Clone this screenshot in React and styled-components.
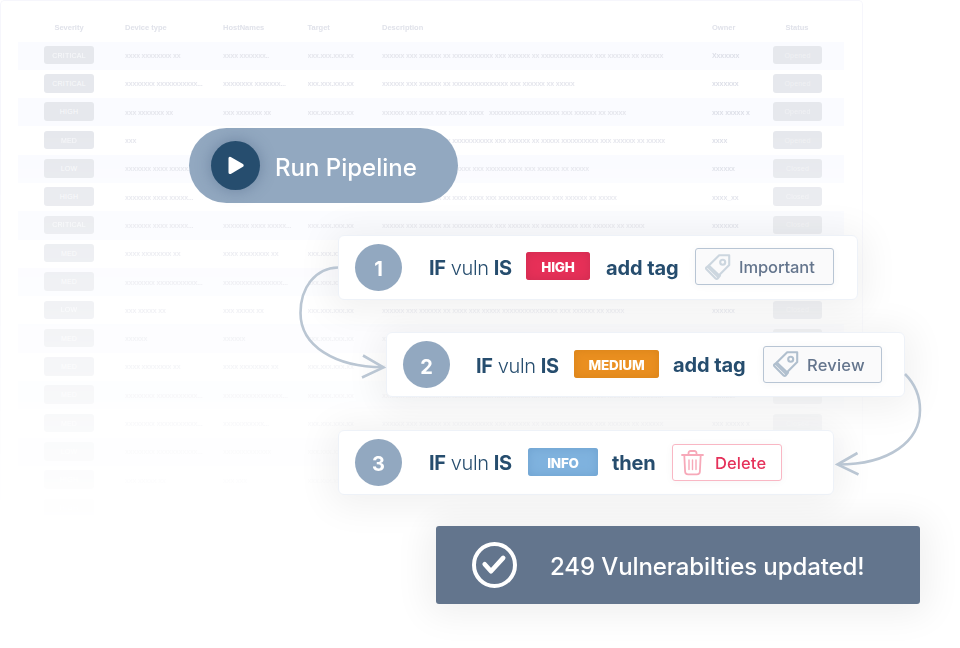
import React from 'react';
import styled, { createGlobalStyle } from 'styled-components';

const GlobalStyle = createGlobalStyle`
  * { box-sizing: border-box; }
  body {
    margin: 0;
    background: #fff;
    overflow: hidden;
    font-family: Inter, "Liberation Sans", sans-serif;
  }
`;

const Stage = styled.main`
  position: relative;
  width: 960px;
  height: 648px;
  overflow: hidden;
  background: #fff;
`;

/* ---------- vulnerability table ---------- */

const TablePanel = styled.section`
  width: 863px;
  height: 526px;
  padding: 12px 18px 0 17px;
  border: 1px solid #f6f6fc;
  border-radius: 4px;
  font-family: "Liberation Sans", sans-serif;
  mask-image: linear-gradient(to bottom, #000 130px, rgba(0, 0, 0, 0.54) 310px, rgba(0, 0, 0, 0.2) 440px, transparent 524px);
`;

const TableGrid = styled.div`
  display: grid;
  grid-template-columns: 100px 98px 84.5px 74.5px 330px 54px 1fr;
  align-items: center;
  padding-left: 7px;
  white-space: nowrap;
`;

const HeaderRow = styled(TableGrid)`
  height: 28.5px;
  color: #e0e2ea;
  font-size: 7.5px;
  font-weight: 700;
`;

const Row = styled(TableGrid)`
  height: 28.3px;
  background: ${(p) => (p.$band ? '#fafbff' : 'transparent')};
`;

const Cell = styled.span`
  color: ${(p) => (p.$strong ? '#dddfe8' : '#e5e6ed')};
  font-size: 7px;
  font-weight: 700;
  letter-spacing: ${(p) => (p.$strong ? -0.1 : -0.18)}px;
  overflow: hidden;
`;

const CenterHead = styled.span`
  width: 50px;
  margin-left: ${(p) => p.$left}px;
  text-align: center;
`;

const Pill = styled.span`
  display: flex;
  align-items: center;
  justify-content: center;
  width: ${(p) => (p.$faint ? 49 : 50)}px;
  height: 18.5px;
  margin: -1px 0 0 ${(p) => p.$left}px;
  border-radius: 3px;
  background: #e6e8ed;
  color: ${(p) => (p.$faint ? '#f0f1f4' : '#f8f9fb')};
  font-size: 7px;
  letter-spacing: 0.2px;
`;

const D1 = 'xxxxxx xxx xxxxxx xx xxxxxxxxxxx xxx xxxxxx xx xxxxxxxxxxxxxx xxx xxxxxx xx xxxxxx';
const ROWS = [
  ['CRITICAL', 'xxxx xxxxxxxx xx', 'xxxx xxxxxxx..', D1, 'Xxxxxxx', 'Opened'],
  ['CRITICAL', 'xxxxxxxx xxxxxxxxxxx...', 'xxxxxxxx xxxxxxx...', 'xxxxxx xxx xxxxxx xx xxxxxxxxxxxxxxx xxx xxxxxx xx xxxxx', 'xxxxxxx', 'Opened'],
  ['HIGH', 'xxx xxxxxxx xx', 'xxx xxxxxxx xx', 'xxxxxx xxx xxxx xxx xxxxx xxxx \u00a0 xxxxxxxxxxxxxxxxxxx xxx xxxxxx xx xxxxx', 'xxx xxxxx x', 'Opened'],
  ['MED', 'xxx', 'xxx', 'xxxxxx xxx xxxxxx xx xxxxxxxxxxx xxx xxxxxx xx xxxxx xxxxxxxxxx xxx xxxxxx xx xxxxx', 'xxxx', 'Opened'],
  ['LOW', 'xxxxxxx xxxx xxxxx...', 'xxxxxxx xxxx xxxxx...', 'xxxxxx xxx xxxxxx xx xxxxx xxx xxxxxxxxxx xxx xxxxxx xx xxxxx', 'xxxxxx', 'Closed'],
  ['HIGH', 'xxxxxxx xxxx xxxxx...', 'xxxxxxx xxxx xxxxx...', 'xxxxxx xxx xxxxxx xx xxxx xxxx xxx xxxxxxxxxxxxxx xxx xxxxxx xx xxxxx', 'xxxx_xx', 'Closed'],
  ['CRITICAL', 'xxxxxxx xxxx xxxxx...', 'xxxxxxx xxxx xxxxx...', 'xxxxxx xxx xxxxxx xx xxxxxxxxxxx xxx xxxxxx xx xxxxxxxxxx xxx xxxxxx xx xxxxx', 'xxxxxxx', 'Closed'],
  ['MED', 'xxxx xxxxxxxx xx', 'xxxx xxxxxxxx xx', D1, 'xxxxxxx', 'Closed'],
  ['MED', 'xxxxxxxx xxxxxxxxxxx...', 'xxxxxxxxxxxxxxxx...', D1, 'xxxxxxx', 'Closed'],
  ['LOW', 'xxx xxxxx xx', 'xxx xxxxx xx', 'xxxxxx xxx xxxxxx xx xxxx xxx xxxxx xxxxxxxxxxxxxxx xxx xxxxxx xx xxxxx', 'xxxxxx', 'Closed'],
  ['MED', 'xxxxxx', 'xxxxxx', D1, 'xxxxxx', 'Closed'],
  ['MED', 'xxxx xxxxxxxx xx', 'xxxx xxxxxxxx xx', D1, 'xxxxxx', 'Closed'],
  ['MED', 'xxxxxxxx xxxxxxxxxxx...', 'xxxxxxxxxxxxxxxx...', D1, 'xxxxxx', 'Closed'],
  ['MED', 'xxxxxxxx xxxxxxxxxxx...', 'xxxxxxxxxxx...', D1, 'xxx xxxxx x', 'Closed'],
  ['LOW', 'xxxxxxxx xxxxxxxxxxx...', 'xxxxxxxxxxxxx', D1, 'xxxxxx', 'Closed'],
  ['HIGH', 'xxx xxxxx xx', 'xxx xxx', D1, 'xxxxxx', 'Closed'],
  ['HIGH', '', '', '', '', ''],
];

function VulnTable() {
  return (
    <TablePanel>
      <HeaderRow>
        <CenterHead $left={19}>Severity</CenterHead>
        <span>Device type</span>
        <span>HostNames</span>
        <span>Target</span>
        <span>Description</span>
        <span>Owner</span>
        <CenterHead $left={6}>Status</CenterHead>
      </HeaderRow>
      {ROWS.map(([severity, device, host, description, owner, status], i) => (
        <Row key={i} $band={i % 2 === 0}>
          <Pill $left={19}>{severity}</Pill>
          <Cell>{device}</Cell>
          <Cell>{host}</Cell>
          <Cell>{device && 'xxx.xxx.xxx.xx'}</Cell>
          <Cell>{description}</Cell>
          <Cell $strong>{owner}</Cell>
          {status && <Pill $left={7} $faint>{status}</Pill>}
        </Row>
      ))}
    </TablePanel>
  );
}

/* ---------- floating pipeline ---------- */

const Overlay = styled.div`
  position: absolute;
  inset: 0;
  display: flex;
  flex-direction: column;
  align-items: flex-start;
  padding-top: 128px;
`;

const RunButton = styled.button`
  display: flex;
  align-items: center;
  width: 269px;
  height: 75px;
  margin: 0 0 31.5px 189px;
  padding: 0 0 0 22px;
  border: 0;
  border-radius: 38px;
  background: #92a8c0;
  color: #fff;
  font: 500 24px Inter, sans-serif;
  letter-spacing: 0;
`;

const PlayDisc = styled.span`
  display: grid;
  place-items: center;
  width: 49px;
  height: 49px;
  margin-right: 15px;
  border-radius: 50%;
  background: #264d6e;
  box-shadow: 0 0 16px rgba(55, 80, 115, 0.4);
`;

const ButtonLabel = styled.span`
  padding-top: 4px;
`;

const Steps = styled.div`
  display: flex;
  flex-direction: column;
  gap: 32.5px;
`;

const Card = styled.article`
  display: flex;
  align-items: center;
  width: ${(p) => p.$width}px;
  height: 65px;
  margin-left: ${(p) => p.$left}px;
  padding-left: 16px;
  border: 1px solid #eef2f8;
  border-radius: 6px;
  background: #fff;
  box-shadow: 0 4px 36px 8px rgba(0, 0, 0, 0.06);
  color: #264d6e;
`;

const StepNumber = styled.span`
  display: grid;
  place-items: center;
  width: 47px;
  height: 47px;
  padding-top: 4px;
  margin: 0 ${(p) => p.$gap || 27}px 0 0;
  border-radius: 50%;
  background: #92a8c0;
  color: #fff;
  font-size: 20px;
  font-weight: 700;
`;

const Condition = styled.p`
  width: ${(p) => p.$width}px;
  margin: 2px 0 0;
  font-size: 20px;
  font-weight: 300;
  letter-spacing: -0.4px;
  white-space: nowrap;
  b { font-weight: 700; }
`;

const Severity = styled.span`
  display: grid;
  place-items: center;
  width: ${(p) => p.$width}px;
  height: 28px;
  margin: ${(p) => p.$top}px ${(p) => p.$gap}px 0 0;
  padding-top: 2px;
  border-radius: 3px;
  background: ${(p) => p.$fill};
  box-shadow: inset 0 0 10px ${(p) => p.$edge};
  color: #fff;
  font-size: 13.5px;
  font-weight: 800;
  letter-spacing: -0.2px;
`;

const Action = styled.span`
  width: ${(p) => p.$width}px;
  margin-top: 1px;
  font-size: 20px;
  font-weight: 700;
  letter-spacing: ${(p) => p.$track}px;
  white-space: nowrap;
`;

const TagBox = styled.span`
  display: flex;
  align-items: center;
  width: ${(p) => p.$width}px;
  height: 37px;
  margin-top: ${(p) => (p.$danger ? 1 : -1)}px;
  padding-left: 8px;
  border: 1.5px solid ${(p) => (p.$danger ? '#f9b7c4' : '#b8c5d4')};
  border-radius: 3px;
  background: ${(p) => (p.$danger ? '#fff' : '#fafafb')};
  box-shadow: 0 1px 8px rgba(0, 0, 0, 0.04);
  color: ${(p) => (p.$danger ? '#e5315a' : '#64758d')};
  font-size: 16.5px;
  font-weight: 500;
  letter-spacing: ${(p) => p.$track}px;
  svg { flex: none; margin-right: ${(p) => (p.$danger ? 11 : 7)}px; }
`;

const TagText = styled.span`
  padding-top: 1px;
`;

const Toast = styled.div`
  display: flex;
  align-items: center;
  width: 484px;
  height: 78px;
  margin: 31.5px 0 0 436px;
  padding-left: 36px;
  border-radius: 3px;
  background: #63758d;
  box-shadow: 0 2px 36px 8px rgba(0, 0, 0, 0.065);
  color: #fff;
  font-size: 24px;
  font-weight: 500;
  letter-spacing: -0.11px;
  white-space: nowrap;
  svg { flex: none; margin-right: 33px; }
`;

const ToastText = styled.span`
  padding-top: 3px;
`;

const Connectors = styled.svg`
  position: absolute;
  inset: 0;
  pointer-events: none;
`;

function PlayIcon() {
  return (
    <svg width="18" height="20" viewBox="0 0 18 20">
      <path d="M3 2.200v14.400L15.200 9.400z" fill="#fff" stroke="#fff" strokeWidth="3" strokeLinejoin="round" />
    </svg>
  );
}

function TagIcon({ color }) {
  return (
    <svg width="28" height="28" viewBox="0 0 28 28" fill="none" stroke={color} strokeWidth="2.1" strokeLinejoin="round" strokeLinecap="round">
      <path d="M15.200 2.200H25.200V12L15 22.200L4.800 12.600z" />
      <path d="M4.800 12.600L2.500 14.300Q1.500 15.200 2.500 16.200L11.600 25.400Q12.700 26.400 13.800 25.400L16 22.500M4.200 14.200L13.600 23.600" />
      <circle cx="18.700" cy="9.200" r="2.500" />
    </svg>
  );
}

function TrashIcon() {
  return (
    <svg width="23" height="26" viewBox="0 0 23 26" fill="none" stroke="#f7a9b9" strokeWidth="1.8" strokeLinejoin="round" strokeLinecap="round">
      <path d="M1 5h21M7.500 4.700V3.200A2.100 2.100 0 0 1 9.600 1h3.800a2.100 2.100 0 0 1 2.100 2.200v1.500M3.300 5.300l.8 16.200a3 3 0 0 0 3 2.900h8.800a3 3 0 0 0 3-2.900l.8-16.200" />
      <path d="M8 10v9.500M11.500 10v9.500M15 10v9.500" strokeWidth="1.4" />
    </svg>
  );
}

function CheckIcon() {
  return (
    <svg width="45" height="46" viewBox="0 0 45 46" fill="none" stroke="#fff" strokeLinecap="round" strokeLinejoin="round">
      <ellipse cx="22.500" cy="23" rx="20.500" ry="20.900" strokeWidth="4" />
      <path d="M12.700 22.200l6.300 7 12.200-13.300" strokeWidth="4.6" />
    </svg>
  );
}

function Rule() {
  return (
    <>
      <b>IF</b> vuln <b>IS</b>
    </>
  );
}

export default function App() {
  return (
    <Stage>
      <GlobalStyle />
      <VulnTable />
      <Overlay>
        <RunButton>
          <PlayDisc><PlayIcon /></PlayDisc>
          <ButtonLabel>Run Pipeline</ButtonLabel>
        </RunButton>
        <Steps>
          <Card $left={338} $width={520}>
            <StepNumber>1</StepNumber>
            <Condition $width={97}><Rule /></Condition>
            <Severity $width={64} $top={-3} $gap={16} $fill="#e63058" $edge="#cf2c51">HIGH</Severity>
            <Action $width={89} $track={-0.1}>add tag</Action>
            <TagBox $width={139} $track={-0.1}>
              <TagIcon color="#ccd6df" />
              <TagText>Important</TagText>
            </TagBox>
          </Card>
          <Card $left={386} $width={519}>
            <StepNumber $gap={26}>2</StepNumber>
            <Condition $width={98}><Rule /></Condition>
            <Severity $width={85} $top={-1} $gap={14} $fill="#ea8f20" $edge="#d8831a">MEDIUM</Severity>
            <Action $width={90} $track={-0.1}>add tag</Action>
            <TagBox $width={119} $track={0.2}>
              <TagIcon color="#b0bfce" />
              <TagText>Review</TagText>
            </TagBox>
          </Card>
          <Card $left={338} $width={496}>
            <StepNumber>3</StepNumber>
            <Condition $width={99}><Rule /></Condition>
            <Severity $width={70} $top={-1} $gap={14} $fill="#7fb2de" $edge="#6fa2cf">INFO</Severity>
            <Action $width={60} $track={-0.15}>then</Action>
            <TagBox $width={110} $danger $track={0.1}>
              <TrashIcon />
              <TagText>Delete</TagText>
            </TagBox>
          </Card>
        </Steps>
        <Toast>
          <CheckIcon />
          <ToastText>249 Vulnerabilties updated!</ToastText>
        </Toast>
      </Overlay>
      <Connectors width="960" height="648" fill="none" stroke="#bac6d3" strokeWidth="2.6">
        <path d="M338 267.500C315 268 300.500 288 300.500 313C300.500 346 335 367 383 367.300" />
        <path d="M363 355.500L383.500 367.300L362 377.500" />
        <path d="M905 374C915 384 920 396 920 410C920 441 890 464.500 838 464.500" />
        <path d="M857.500 453L837.500 464.500L858.500 474.500" />
      </Connectors>
    </Stage>
  );
}
